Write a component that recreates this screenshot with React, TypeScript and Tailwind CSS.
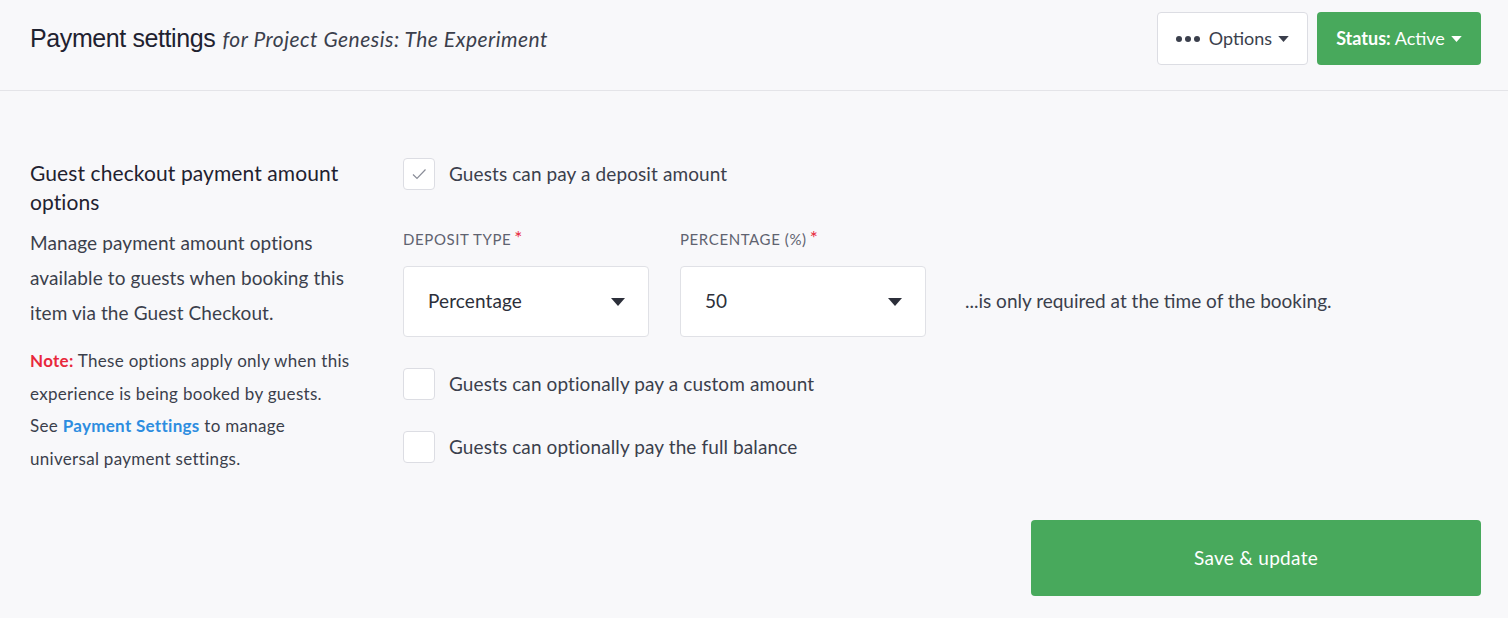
import React from "react";

const font = { fontFamily: "Lato, 'Open Sans', sans-serif" };

function Caret({ className }: { className?: string }) {
  return (
    <svg viewBox="0 0 14 8" className={className} fill="currentColor">
      <path d="M0 0h14L7 8z" />
    </svg>
  );
}

function Checkbox({ checked, label }: { checked?: boolean; label: string }) {
  return (
    <label className="flex items-center gap-[14px]">
      <span className="flex h-8 w-8 items-center justify-center rounded border border-[#dcdde3] bg-white">
        {checked && (
          <svg viewBox="0 0 20 20" className="h-5 w-5" fill="none" stroke="#8a8d98" strokeWidth="1.2">
            <path d="M4 10.5l4 4 8.5-9" />
          </svg>
        )}
      </span>
      <span className="text-[19px] tracking-[0.1px] text-[#3b3f4c]">{label}</span>
    </label>
  );
}

function Select({ label, value }: { label: string; value: string }) {
  return (
    <div className="w-[246px]">
      <div className="flex h-[18px] items-center text-[15px] uppercase leading-none tracking-[0.6px] text-[#5f6370]">
        {label}
        <span className="ml-[3px] -mt-1 text-[19px] text-[#e8283c]">*</span>
      </div>
      <div className="mt-[18px] flex h-[71px] items-center justify-between rounded border border-[#e0e1e6] bg-white pl-6 pr-[23px]">
        <span className="text-[19px] tracking-[0.1px] text-[#2c2f3a]">{value}</span>
        <Caret className="h-[8px] w-[14px] text-[#2c2f3a]" />
      </div>
    </div>
  );
}

export default function App() {
  return (
    <div className="min-h-screen bg-[#f8f8fa] text-[#2c2f3a]" style={font}>
      {/* Header */}
      <header className="h-[91px] border-b border-[#e4e4e8] pl-[30px] pr-[27px] pt-[12px]">
        <div className="flex h-[53px] items-center justify-between">
          <h1 className="flex items-baseline gap-[7px]">
            <span
              className="text-[25px] tracking-[-0.4px] text-[#1f2230]"
              style={{ fontFamily: "'Liberation Sans', Arial, sans-serif" }}
            >
              Payment settings
            </span>
            <span className="text-[21px] italic tracking-[0.5px] text-[#3b3f4c]">for Project Genesis: The Experiment</span>
          </h1>
          <div className="flex gap-[9px]">
            <button className="flex h-[53px] w-[151px] items-center justify-center gap-[9px] rounded border border-[#dcdde3] bg-white text-[18px] text-[#3b3f4c]">
              <svg viewBox="0 0 24 6" className="h-[6px] w-[24px]" fill="#3b3f4c">
                <circle cx="3" cy="3" r="3" />
                <circle cx="12" cy="3" r="3" />
                <circle cx="21" cy="3" r="3" />
              </svg>
              <span className="flex items-center gap-[6px]">
                Options
                <Caret className="h-[6px] w-[11px]" />
              </span>
            </button>
            <button className="flex h-[53px] w-[164px] items-center justify-center gap-[6px] rounded bg-[#48a95c] text-[18px] text-white">
              <span>
                <span className="font-bold">Status:</span> Active
              </span>
              <Caret className="h-[6px] w-[11px]" />
            </button>
          </div>
        </div>
      </header>

      {/* Content */}
      <main className="pl-[30px] pr-[27px] pt-[67px]">
        <div className="flex">
          <div className="w-[373px]">
            <div className="w-[355px]">
              <h2 className="text-[21px] leading-[29px] tracking-[0.1px] text-[#1f2230]">
                Guest checkout payment amount options
              </h2>
              <p className="mt-[9px] text-[19px] leading-[35px] tracking-[0.1px] text-[#3b3f4c]">
                Manage payment amount options available to guests when booking this item via the Guest Checkout.
              </p>
              <p className="mt-[15px] w-[322px] text-[17px] leading-[32.5px] tracking-[0.3px] text-[#3b3f4c]">
                <span className="font-bold text-[#e8283c]">Note:</span> These options apply only when this experience
                is being booked by guests. See{" "}
                <a href="#" className="font-bold text-[#2d8de0]">
                  Payment Settings
                </a>{" "}
                to manage universal payment settings.
              </p>
            </div>
          </div>

          <div className="flex-1">
            <Checkbox checked label="Guests can pay a deposit amount" />
            <div className="mt-10 flex items-end gap-[31px]">
              <Select label="Deposit Type" value="Percentage" />
              <Select label="Percentage (%)" value="50" />
              <div className="flex h-[71px] items-center pl-[8px] text-[19px] text-[#3b3f4c]">
                ...is only required at the time of the booking.
              </div>
            </div>
            <div className="mt-[31px] flex flex-col gap-[31px]">
              <Checkbox label="Guests can optionally pay a custom amount" />
              <Checkbox label="Guests can optionally pay the full balance" />
            </div>
          </div>
        </div>

        <div className="mt-[45px] flex justify-end">
          <button className="h-[76px] w-[450px] rounded bg-[#48a95c] text-[19px] tracking-[0.3px] text-white">
            Save &amp; update
          </button>
        </div>
      </main>
    </div>
  );
}
